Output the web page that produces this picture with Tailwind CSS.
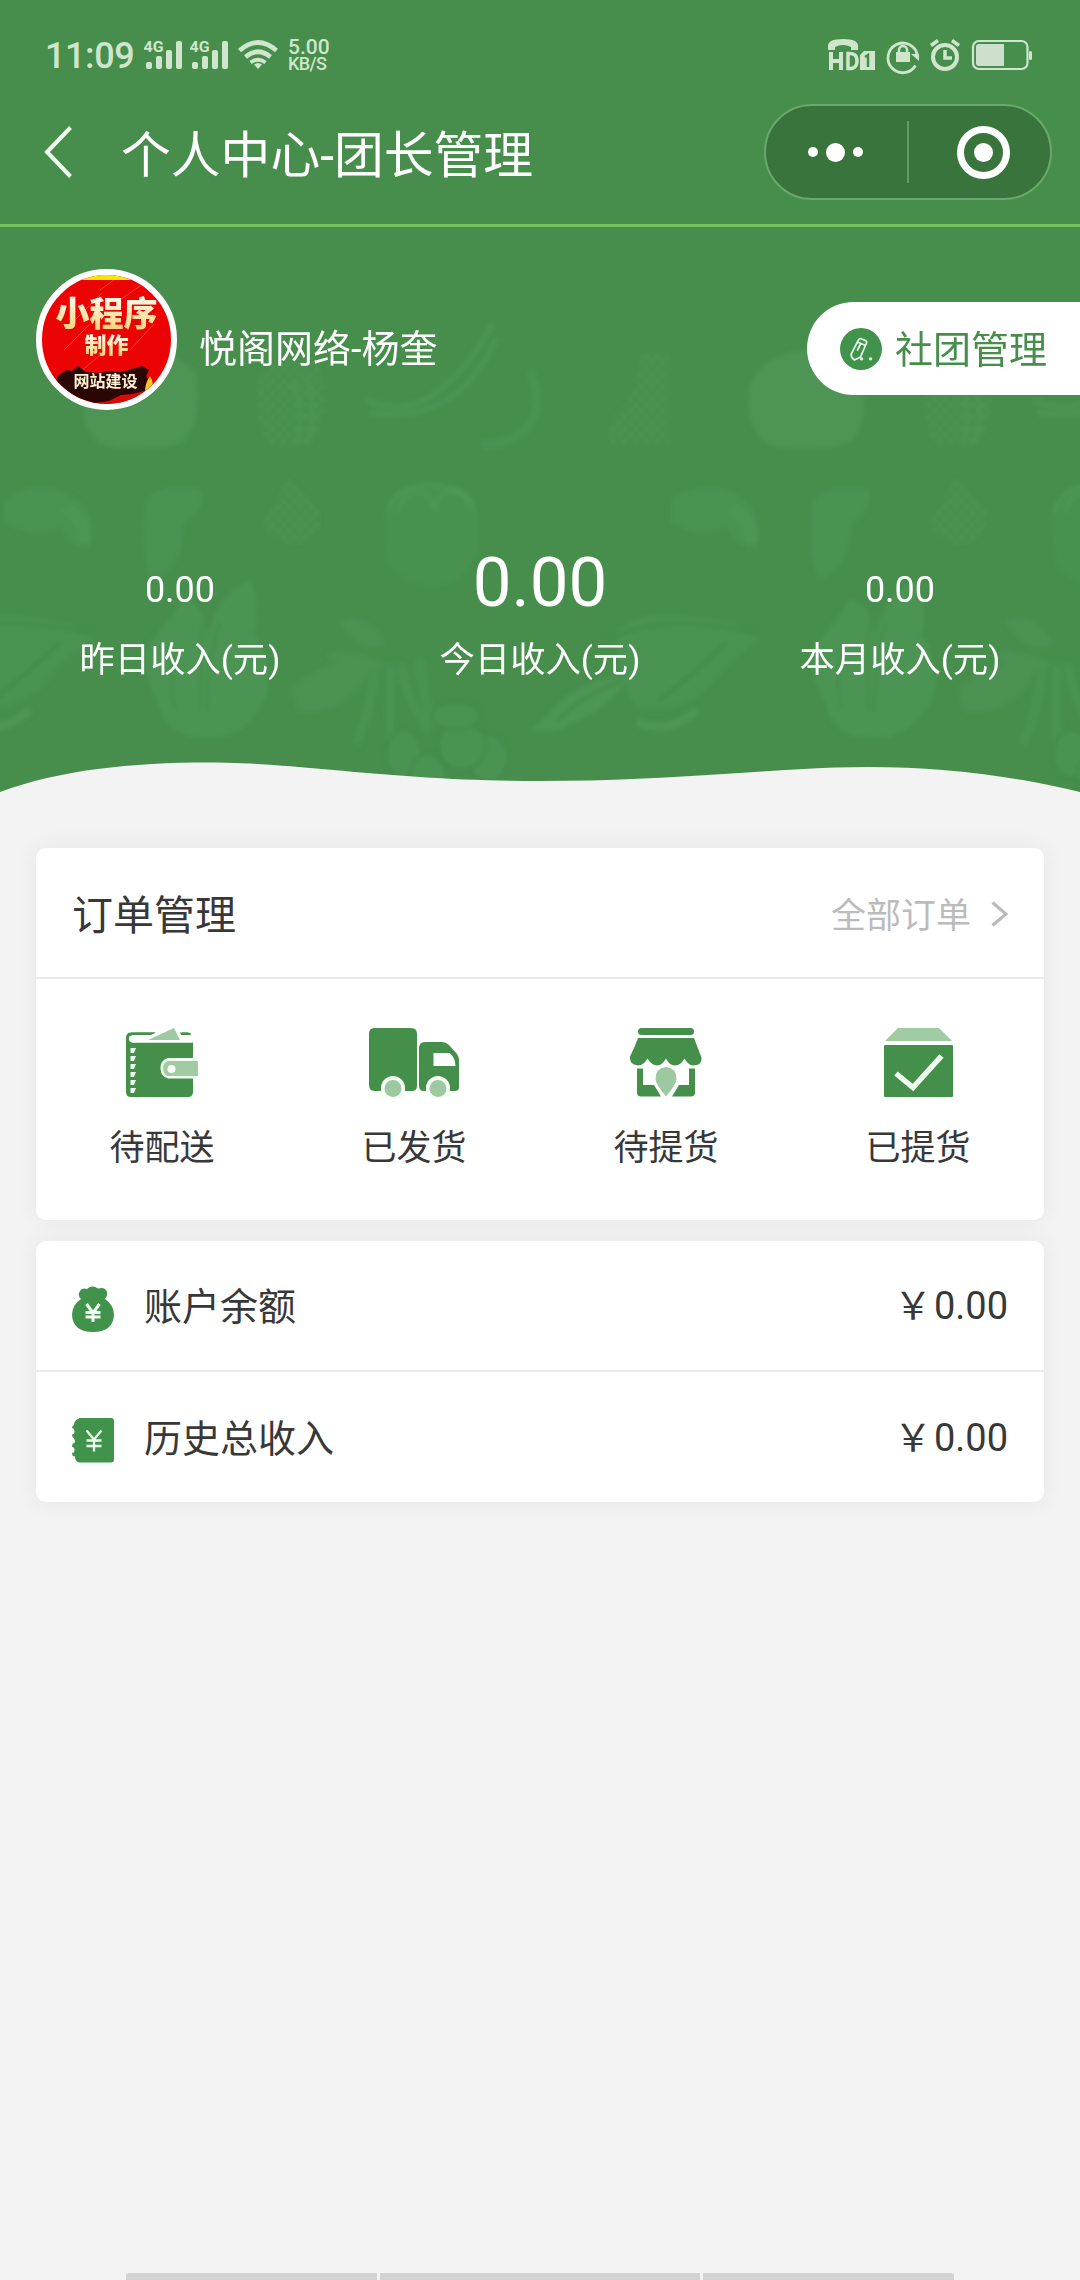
<!DOCTYPE html>
<html lang="zh-CN">
<head>
<meta charset="utf-8">
<title>个人中心-团长管理</title>
<script src="https://cdn.jsdelivr.net/npm/@tailwindcss/browser@4"></script>
</head>
<body class="bg-[#f3f3f3] font-['Roboto','Noto_Sans_CJK_SC',sans-serif]">
<div class="w-[1080px] h-[2280px] flex flex-col overflow-hidden text-[#383838]">

  <header class="h-[227px] shrink-0 bg-[#478e4d] border-b-[3px] border-[#74c159] flex flex-col">
    <!-- status bar -->
    <div class="h-[104px] pt-[32px] pl-[45px] pr-[48px] flex items-start justify-between text-[#cfe6cd]">
      <div class="flex items-start">
        <span class="text-[36px] leading-[49px] w-[99px] font-medium tracking-[-0.4px]">11:09</span>
        <svg class="w-[46px] h-[48px]" viewBox="144 32 46 48" fill="currentColor">
          <text x="143.5" y="52" font-size="14.5" font-weight="700" textLength="20" lengthAdjust="spacingAndGlyphs">4G</text>
          <rect x="146" y="62" width="6" height="7" rx="2"/><rect x="156" y="56" width="6" height="13" rx="2"/><rect x="166" y="50" width="6" height="19" rx="2"/><rect x="176" y="41" width="6" height="28" rx="2"/>
        </svg>
        <svg class="w-[46px] h-[48px]" viewBox="144 32 46 48" fill="currentColor">
          <text x="143.5" y="52" font-size="14.5" font-weight="700" textLength="20" lengthAdjust="spacingAndGlyphs">4G</text>
          <rect x="146" y="62" width="6" height="7" rx="2"/><rect x="156" y="56" width="6" height="13" rx="2"/><rect x="166" y="50" width="6" height="19" rx="2"/><rect x="176" y="41" width="6" height="28" rx="2"/>
        </svg>
        <svg class="w-[51px] h-[48px]" viewBox="236 32 51 48" fill="none" stroke="currentColor" stroke-width="4.600">
          <path d="M239.500 50.500Q258 34.500 276.500 50.500M245.500 57Q258 46.500 270.500 57"/><path d="M250.500 62.500Q258 57 265.500 62.500" stroke-width="3.800"/><path d="M254 64.500Q258 61.500 262 64.500L258 69Z" fill="currentColor" stroke="none"/>
        </svg>
        <div class="flex flex-col pt-[6px] pl-[1px]">
          <span class="text-[21px] leading-[18px] font-medium">5.00</span>
          <span class="text-[18px] leading-[16px] font-medium tracking-[-0.6px]">KB/S</span>
        </div>
      </div>
      <svg class="w-[206px] h-[48px]" viewBox="826 32 206 48" fill="none" stroke="currentColor">
        <path d="M828 50v-4q0-7 15-7t15 7v4h-7v-3q-4-2-8-2t-8 2v3z" fill="currentColor" stroke="none"/>
        <path d="M831 52v18M841 52v18M831 61h10" stroke-width="4"/>
        <path d="M848 53.500v15q9 1 9-7.500t-9-7.500z" stroke-width="3.500"/>
        <path d="M860 55l4-4h11v19h-15z" fill="currentColor" stroke="none"/>
        <path d="M865 57l3-2v12" stroke="#478e4d" stroke-width="2.500"/>
        <path d="M915.500 65.500A14.800 14.800 0 1 1 917.300 55" stroke-width="2.800"/>
        <path d="M911 54h8v7z" fill="currentColor" stroke="none"/>
        <rect x="896" y="52" width="14" height="10" fill="currentColor" stroke="none"/><path d="M899 53v-3a4 4 0 0 1 8 0v3" stroke-width="2.500"/>
        <circle cx="945" cy="57" r="12" stroke-width="4"/><path d="M945 50v8h7" stroke-width="3.500"/><path d="M931 45.500l7-5M959 45.500l-7-5" stroke-width="3.500"/>
        <rect x="973" y="41" width="54.500" height="28" rx="6" stroke-width="2.200"/>
        <path d="M979 44h25v22h-25q-3 0-3-3v-16q0-3 3-3z" fill="#cfdfcd" stroke="none"/><rect x="1029" y="51" width="3" height="9" rx="1.500" fill="currentColor" stroke="none"/>
      </svg>
    </div>
    <!-- navigation bar -->
    <div class="h-[96px] pl-[44px] pr-[28px] flex items-center text-white">
      <svg class="w-[28px] h-[54px] mr-[49px]" viewBox="0 0 28 54" fill="none" stroke="#f1fff1" stroke-width="4"><path d="M26.500 2.500L3 27l23.500 24.500"/></svg>
      <h1 class="text-[49.800px] leading-[60px] pt-[7px] whitespace-nowrap">个人中心-团长管理</h1>
      <div class="ml-auto w-[288px] h-[96px] rounded-full border-2 border-[#6aa96c] bg-[#3a743d] flex items-center">
        <div class="w-[141px] flex items-center justify-center gap-[8px] pr-[3px]">
          <i class="size-[10px] rounded-full bg-white"></i><i class="size-[19px] rounded-full bg-white"></i><i class="size-[10px] rounded-full bg-white"></i>
        </div>
        <div class="w-[2px] h-[62px] bg-[#5f9d61]"></div>
        <div class="flex-1 flex items-center justify-center pl-[7px]">
          <div class="size-[53px] rounded-full border-[7px] border-white flex items-center justify-center"><i class="size-[19px] rounded-full bg-white"></i></div>
        </div>
      </div>
    </div>
  </header>

  <section class="relative h-[585px] shrink-0 bg-[#478e4d] text-white">
    <!-- vegetable backdrop, one drawing repeated across the width, and the wave at the foot -->
    <svg class="absolute inset-0 w-[1080px] h-[585px]" viewBox="0 227 1080 585">
      <defs>
        <pattern id="seed" width="11" height="12" patternUnits="userSpaceOnUse"><circle cx="3" cy="3" r="2.500" fill="#549b59"/><circle cx="8.500" cy="9" r="2.500" fill="#549b59"/></pattern>
        <filter id="soft" x="-10%" y="-10%" width="120%" height="120%"><feGaussianBlur stdDeviation="2.200"/></filter>
        <g id="veg" filter="url(#soft)">
          <path d="M82 390q-4 40 20 55q40 10 80-2q22-20 14-70q-20-22-54-22q-50 0-60 39z" fill="#4d9454"/>
          <path d="M258 375q-6 50 14 70h40q18-30 8-78q-30-24-62 8z" fill="url(#seed)" opacity=".7"/>
          <path d="M292 380q14 34 4 66M306 376q12 34 2 66" fill="none" stroke="#4d9454" stroke-width="5"/>
          <path d="M366 400q40 18 74-10t52-66M370 412q50 10 88-20q26-24 38-54" fill="none" stroke="#4d9454" stroke-width="6"/>
          <path d="M530 372q16 36-4 56q-18 18-44 16" fill="none" stroke="#4c9352" stroke-width="9"/>
          <path d="M640 354h28v90h-58q-6-24 14-36q16-22 16-54z" fill="url(#seed)" opacity=".7"/>
          <path d="M4 500q40-26 72 0q22 18 14 46q-22 2-28-18q-34 10-58-6z" fill="#4c9352"/>
          <path d="M62 510q20 10 20 34M68 506q18 10 20 36" fill="none" stroke="#529a59" stroke-width="2"/>
          <path d="M146 500q20-20 56-10q4 20-18 34q0 44-32 56q-14-30-6-80z" fill="#4c9352"/>
          <path d="M288 480q28 16 32 40q0 22-30 24q-18-4-28-20z" fill="url(#seed)" opacity=".7"/>
          <path d="M384 516q8-36 48-34t46 30v40q-10 32-46 34q-44-4-46-36z" fill="#4a9150"/>
          <path d="M388 512q6-28 46-26t40 26M398 512q6-20 20-20t16 18q4-20 20-18t14 16" fill="none" stroke="#529a59" stroke-width="2.500"/>
          <path d="M182 600q24 2 26 40q6-44 42-60q12 30 4 54q24 40 8 70q-20 34-52 34q-44 2-52-36q-20-36-8-60q18-18 32-42z" fill="#4c9453"/>
          <path d="M204 610q-6 50-2 100M220 622q-14 40-12 90M176 650q-10 36 0 60" fill="none" stroke="#468d4c" stroke-width="2.500"/>
          <path d="M-50 630q24-22 76-12q46 0 68 22q-26 14-48 42q-30 34-76 24q-20-20-20-76z" fill="#4b9352"/>
          <path d="M-60 640q60-30 150-6M-10 702q40-30 70-60" fill="none" stroke="#458c4b" stroke-width="4"/>
          <path d="M-30 722q30 14 60-12" fill="none" stroke="#4f9656" stroke-width="8"/>
          <path d="M338 620q30-10 48 24q-26 14-48-24zM290 690q38-34 84-30q-20 56-76 52zM326 654q30-6 60 10q-40 12-60-10z" fill="#4b9252"/>
          <path d="M376 664q-6 50-20 80M390 664v76M400 664q8 40 30 66M420 660q2 40 14 66" fill="none" stroke="#4c9353" stroke-width="9"/>
          <g fill="#4c9353" stroke="#428848" stroke-width="2"><ellipse cx="404" cy="754" rx="18" ry="24"/><ellipse cx="488" cy="758" rx="20" ry="24"/><ellipse cx="428" cy="774" rx="18" ry="20"/><circle cx="462" cy="746" r="24"/><ellipse cx="456" cy="716" rx="24" ry="14"/></g>
          <path d="M634 672q-56 8-80 36q-16 18-26 22q22 6 44-6q38-16 62-52z" fill="#4e9555"/>
          <path d="M624 680q-40 14-68 42" fill="none" stroke="#458c4b" stroke-width="3"/>
        </g>
      </defs>
      <use href="#veg"/><use href="#veg" x="667"/>
      <path d="M0 792C60 770 130 762.500 210 762.500C300 762.500 390 781 540 781C680 781 780 767 868 767C940 767 1010 775 1080 792V812H0Z" fill="#f3f3f3"/>
    </svg>
    <div class="relative h-[225px] pl-[36px] flex items-center">
      <div class="relative size-[141px] shrink-0 rounded-full border-[6px] border-white bg-[#ec0405] overflow-hidden">
        <svg class="size-[129px]" viewBox="42 275 129 129" font-family="'Noto Sans CJK SC',sans-serif" text-anchor="middle">
          <defs><linearGradient id="gold" x1="0" y1="0" x2="0" y2="1"><stop offset=".3" stop-color="#fff6e0"/><stop offset=".95" stop-color="#f9d070"/></linearGradient></defs>
          <rect x="42" y="274" width="129" height="6" fill="#fbe606"/>
          <path d="M70 325l32-32M64 350l26-26M80 372l24-20M120 300l20-14M130 350l24-26M100 290l14-10" stroke="#f95548" stroke-width="1" opacity=".7"/>
          <path d="M40 368q20 6 32 30q36 12 66-10l34-16v34H40z" fill="#d60a08"/>
          <path d="M58 376l8-6l6 1l6-5l8 6l14 1l8-2l14 1l20-6l7 4l-3 6l5 8l-4 6l-14 4l-12 1l-12 6l-14 2l-14-4l-12 1l-8-8l-8-2z" fill="#2a0705"/>
          <path d="M150 376q5 8 1 16h-6q0-9 5-16z" fill="#ffc526"/>
          <text x="106.500" y="325.500" font-size="34" font-weight="900" fill="url(#gold)">小程序</text>
          <text x="106.500" y="353" font-size="22" font-weight="900" fill="url(#gold)">制作</text>
          <text x="105.500" y="386.500" font-size="16" font-weight="700" fill="#fff3d2">网站建设</text>
        </svg>
      </div>
      <span class="ml-[22px] mt-[19px] text-[38px] leading-[48px] whitespace-nowrap">悦阁网络-杨奎</span>
      <div class="ml-auto mt-[18px] w-[273px] h-[93px] rounded-l-full bg-white text-[#478e4d] flex items-center pl-[33px]">
        <svg class="size-[42px]" viewBox="0 0 42 42" fill="none" stroke="#e6ffe8" stroke-width="1.700" stroke-linejoin="round" stroke-linecap="round">
          <circle cx="21" cy="21" r="21" fill="#41924a" stroke="none"/>
          <path d="M18.500 11.800q.8-1.600 2.500-1l4.500 1.800q1.700.8 1 2.400L20.500 29l-6 3q-3-1.500-3.500-5.500zM17.500 14l8 3.500M17.500 22l3-6"/><path d="M21.500 30.800h.2M30.500 30.800h.2" stroke-width="3.200"/>
        </svg>
        <span class="ml-[13px] pt-[2px] text-[38px] leading-[48px] whitespace-nowrap">社团管理</span>
      </div>
    </div>
    <div class="relative h-[234px] grid grid-cols-3 items-end text-center">
      <div class="flex flex-col"><span class="text-[36px] leading-[42px]">0.00</span><span class="mt-[23px] text-[35.300px] leading-[52px]">昨日收入(元)</span></div>
      <div class="flex flex-col"><span class="text-[69px] leading-[80px]">0.00</span><span class="mt-[11px] text-[35.300px] leading-[52px]">今日收入(元)</span></div>
      <div class="flex flex-col"><span class="text-[36px] leading-[42px]">0.00</span><span class="mt-[23px] text-[35.300px] leading-[52px]">本月收入(元)</span></div>
    </div>
  </section>

  <main class="mt-[36px] px-[36px] flex flex-col gap-[21px]">
    <section class="h-[372px] rounded-[10px] bg-white shadow-[0_0_24px_rgba(0,0,0,0.06)]">
      <div class="h-[131px] px-[36px] border-b-2 border-[#e9e9e9] flex items-center">
        <h2 class="text-[41px] leading-[50px] pt-[6px]">订单管理</h2>
        <span class="ml-auto pt-[9px] text-[35px] leading-[44px] text-[#bbbbbb]">全部订单</span>
        <svg class="ml-[20px] mt-[2px] w-[17px] h-[26px]" viewBox="0 0 17 26" fill="none" stroke="#b9b9b9" stroke-width="3"><path d="M1.500 1.500L15 13L1.500 24.500"/></svg>
      </div>
      <div class="grid grid-cols-4 pt-[49px] text-[35px] leading-[44px] text-center">
        <div class="flex flex-col items-center gap-[29px]">
          <svg class="w-[100px] h-[70px]" viewBox="112 1028 100 70">
            <path d="M131 1032.500H188q3 0 3 2H183l-1-2h-26l-4 2H132q-3 1.500-3 4t3 4H193V1092q0 5-5 5H131q-5 0-5-5V1038q0-5.500 5-5.500z" fill="#44904a"/>
            <path d="M129 1038q0-4 5-4h52q6 0 6 4v4.500h-59q-4 0-4-4.500z" fill="#fff"/>
            <path d="M128 1036q1-3.500 5-3.500h22l-4 2.500h-17q-4 0-6 3zM180 1032.500h7q3 0 4 2.500h-10z" fill="#44904a"/>
            <path d="M148 1040l26-12l6 12z" fill="#9ecaa1"/>
            <path d="M130.500 1048h5.500l-2 5h-3.500zM130.500 1056h5.500l-2 5h-3.500zM130.500 1064h5.500l-2 5h-3.500zM130.500 1072h5.500l-2 5h-3.500zM130.500 1080h5.500l-2 5h-3.500zM130.500 1088h5.500l-2 5h-3.500z" fill="#effff0"/>
            <path d="M168 1058h30v20.500h-30q-7.500-2-7.500-10.200t7.500-10.300z" fill="#f1fff1"/><path d="M168 1061h30v15h-30q-5-1.500-5-7.500t5-7.500z" fill="#a0cba3"/><circle cx="171.500" cy="1069" r="4" fill="#fff"/>
          </svg>
          <span>待配送</span>
        </div>
        <div class="flex flex-col items-center gap-[29px]">
          <svg class="w-[100px] h-[70px]" viewBox="364 1028 100 70">
            <path d="M374 1028h37q6 0 6 6v52q0 5-5 5h-37q-6 0-6-6v-51q0-6 5-6z" fill="#44904a"/>
            <path d="M425 1042h17q4 0 7 3l8 9q2 3 2 6v27q0 4-4 4h-31q-5 0-5-5v-38q0-6 6-6z" fill="#44904a"/>
            <path d="M433.500 1053h16q6 5 6 13h-22z" fill="#fff"/>
            <path d="M381 1098v-10a12 12 0 0 1 24 0v10zM426 1098v-10a12 12 0 0 1 24 0v10z" fill="#f7fff7"/>
            <circle cx="393" cy="1088.500" r="8.500" fill="#9cc9a0"/><circle cx="438" cy="1088.500" r="8.500" fill="#9cc9a0"/>
          </svg>
          <span>已发货</span>
        </div>
        <div class="flex flex-col items-center gap-[29px]">
          <svg class="w-[100px] h-[70px]" viewBox="616 1028 100 70">
            <rect x="638" y="1028" width="56" height="7" rx="3.500" fill="#44904a"/>
            <path d="M638 1038h56q3 8 7.500 19.500q1 8-9 8q-5-1-8-7q-4 7-9.500 7t-9-7q-4 7-9 7t-9.500-7q-4 7-9.500 7q-9-1-8-9q5-10 8-18.500z" fill="#44904a"/>
            <path d="M637 1068.500h6v16.500h11l7 11.500h-20q-4 0-4-4zM695 1068.500h-6v16.500h-10l-7 11.500h19q4 0 4-4z" fill="#44904a"/>
            <path d="M666 1067q10.500 1 10.500 12q0 5-10.500 17.500q-10.500-12.500-10.500-17.500q0-11 10.500-12z" fill="#9cc9a0"/>
          </svg>
          <span>待提货</span>
        </div>
        <div class="flex flex-col items-center gap-[29px]">
          <svg class="w-[100px] h-[70px]" viewBox="869 1028 100 70">
            <path d="M899 1028h41l13 13h-67z" fill="#a0cba3"/><rect x="885" y="1045" width="69" height="52" rx="1" fill="#44904a"/>
            <path d="M897 1073.500l17 14l28.500-31.500" fill="none" stroke="#effff0" stroke-width="5.500"/>
          </svg>
          <span>已提货</span>
        </div>
      </div>
    </section>

    <section class="h-[261px] rounded-[10px] bg-white shadow-[0_0_24px_rgba(0,0,0,0.06)] text-[38px] leading-[48px]">
      <div class="h-[131px] px-[36px] border-b-2 border-[#ececec] flex items-center">
        <svg class="w-[42px] h-[46px] mt-[6px]" viewBox="0 0 42 46">
          <path d="M9 13Q5 9 8 5Q10 1.500 15 3Q20-1.500 26 2.500Q32 1 34 4Q37 8 33 13Q42 19 42 29Q41 46 21 46Q1 46 0 29Q0 19 9 13Z" fill="#41924a"/>
          <path d="M14.500 18l6.500 9l6.500-9M21 26v10M13.500 26.500h15M13.500 31h15" fill="none" stroke="#f2fff2" stroke-width="3"/>
        </svg>
        <span class="ml-[30px] pt-[2px]">账户余额</span>
        <span class="ml-auto pt-px"><span class="mr-[2px]">￥</span>0.00</span>
      </div>
      <div class="h-[130px] px-[36px] flex items-center">
        <svg class="w-[42px] h-[46px] mt-[6px]" viewBox="0 0 42 46">
          <path d="M7 1h32q3 0 3 3v38.500q0 3-3 3h-32q-4-1-4-6q-3 0-3-3.500q2.500 0 2.500-3t-2.500-3q0-3.500 2-4t0-4.500q-2-1-2-4q2.500 0 2.500-3t-2.500-3.500q0-2 2-3q0-5 5-6.500z" fill="#41924a"/>
          <path d="M14.500 13.500l7.500 9l7.500-9M22 22v12.500M14.500 23.500h15M14.500 29h15" fill="none" stroke="#e9ffea" stroke-width="2.300"/>
        </svg>
        <span class="ml-[30px] pt-[3px]">历史总收入</span>
        <span class="ml-auto pt-[2px]"><span class="mr-[2px]">￥</span>0.00</span>
      </div>
    </section>
  </main>

  <!-- gesture bar -->
  <div class="mt-auto h-[7px] px-[126px] flex gap-[3px]">
    <i class="w-[251px] rounded-tl-[3px] bg-[#d3d3d3]"></i><i class="flex-1 bg-[#d3d3d3]"></i><i class="w-[251px] rounded-tr-[3px] bg-[#d3d3d3]"></i>
  </div>
</div>
</body>
</html>
